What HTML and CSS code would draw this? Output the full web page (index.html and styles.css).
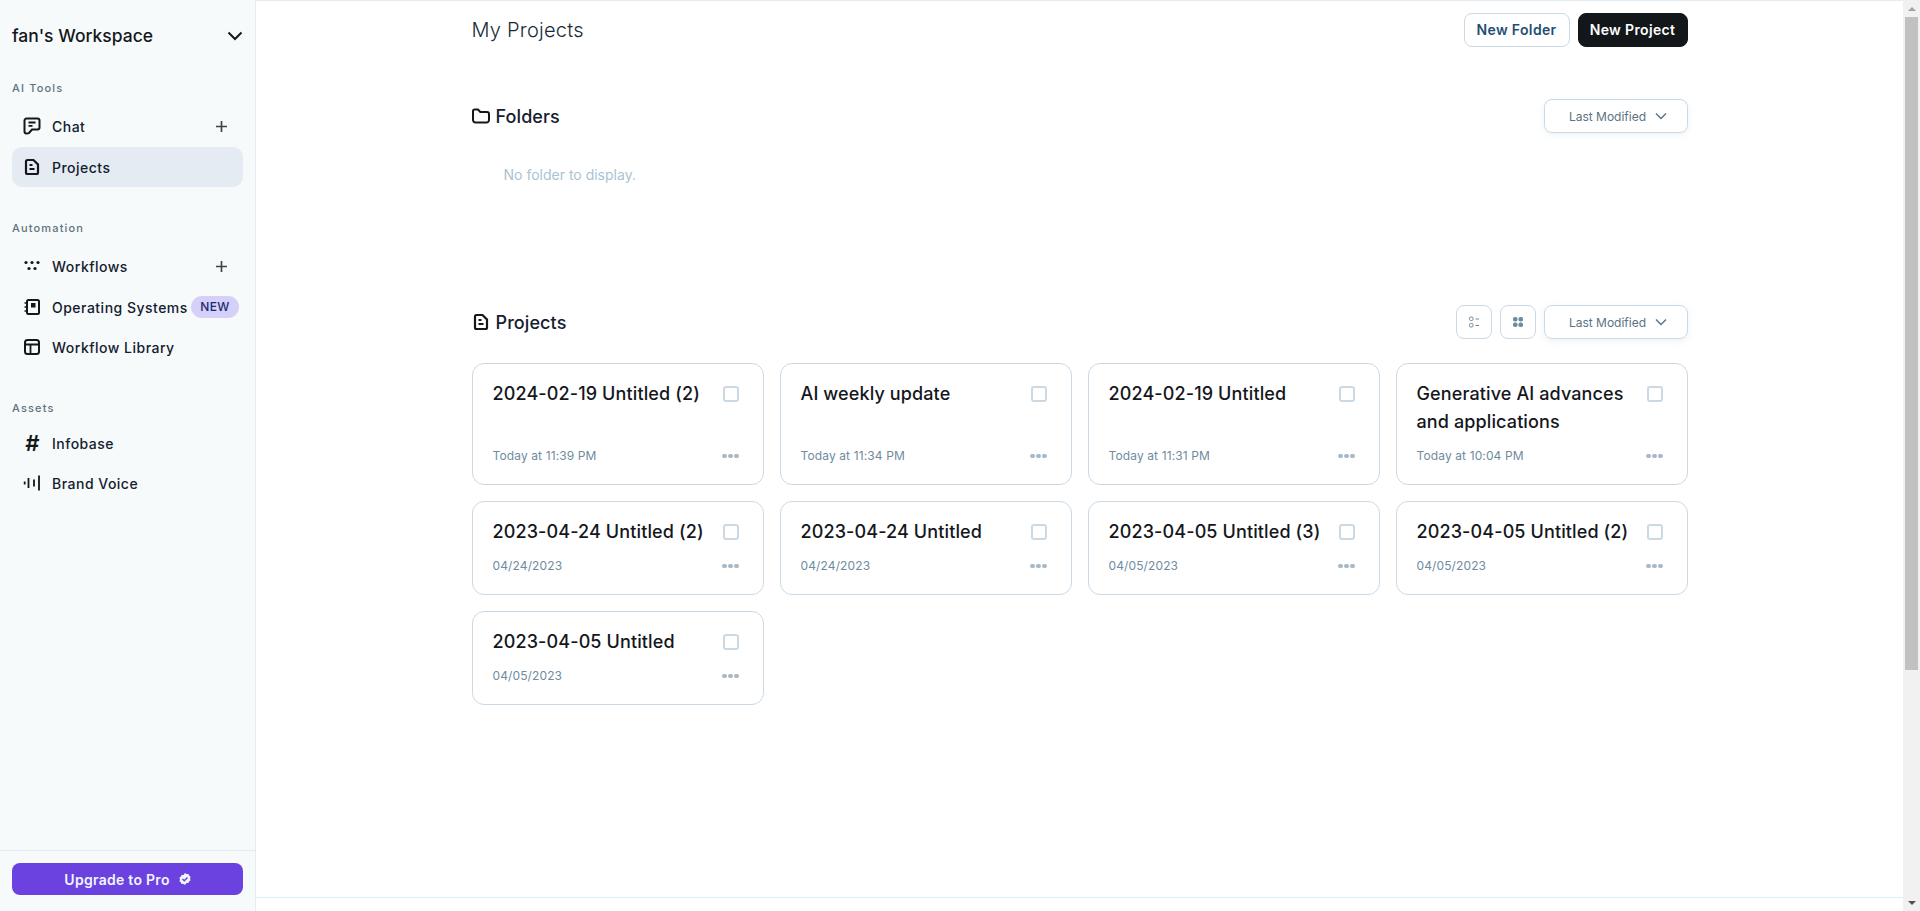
FILE: index.html
```html
<!DOCTYPE html>
<html lang="en">
<head>
<meta charset="utf-8">
<title>My Projects</title>
<link rel="stylesheet" href="styles.css">
</head>
<body>
<aside class="sidebar">
  <div class="side-top">
    <div class="workspace">
      <span>fan's Workspace</span>
      <svg class="ws-caret" width="16" height="16" viewBox="0 0 16 16"><path d="M1.500 4.500L8 11l6.500-6.500" fill="none" stroke="currentColor" stroke-width="2"/></svg>
    </div>
    <div class="group group-ai">
      <div class="group-label">AI Tools</div>
      <div class="nav-item nav-tall">
        <svg class="ico" viewBox="0 0 18 18"><path d="M3.500 1.500h11a2 2 0 0 1 2 2v7a2 2 0 0 1-2 2H9l-3 3.500c-.5.5-1.500.5-2.500.5a2 2 0 0 1-2-2v-11a2 2 0 0 1 2-2z" fill="none" stroke="currentColor" stroke-width="2"/><path d="M5.500 5.500h7M5.500 8.800h4" stroke="currentColor" stroke-width="1.800"/></svg>
        <span class="nav-text">Chat</span>
        <svg class="plus" viewBox="0 0 12 12"><path d="M6 0v12M0 6h12" stroke="currentColor" stroke-width="1.800"/></svg>
      </div>
      <div class="nav-item nav-active">
        <svg class="ico" viewBox="0 0 18 18"><path d="M4.500 2h6l4.500 4.500v8a1.500 1.500 0 0 1-1.500 1.500h-9A1.500 1.500 0 0 1 3 14.500v-11A1.500 1.500 0 0 1 4.500 2z" fill="none" stroke="currentColor" stroke-width="2.200"/><path d="M6.500 7h3M6.500 11h5" stroke="currentColor" stroke-width="1.800"/></svg>
        <span class="nav-text">Projects</span>
      </div>
    </div>
    <div class="group group-auto">
      <div class="group-label">Automation</div>
      <div class="nav-item nav-tall">
        <svg class="ico" viewBox="0 0 18 18"><g fill="currentColor"><circle cx="3" cy="5.500" r="1.600"/><circle cx="9" cy="5.500" r="1.600"/><circle cx="15" cy="5.500" r="1.600"/><circle cx="6" cy="11.500" r="1.600"/><circle cx="12" cy="11.500" r="1.600"/></g></svg>
        <span class="nav-text">Workflows</span>
        <svg class="plus" viewBox="0 0 12 12"><path d="M6 0v12M0 6h12" stroke="currentColor" stroke-width="1.800"/></svg>
      </div>
      <div class="nav-item">
        <svg class="ico" viewBox="0 0 18 18"><rect x="4" y="2" width="12" height="14" rx="1.500" fill="none" stroke="currentColor" stroke-width="2"/><rect x="8" y="5" width="4.500" height="4.500" fill="currentColor"/><path d="M1.500 5h3M1.500 9h3M1.500 13h3" stroke="currentColor" stroke-width="1.600"/></svg>
        <span class="nav-text">Operating Systems</span>
        <span class="badge">NEW</span>
      </div>
      <div class="nav-item">
        <svg class="ico" viewBox="0 0 18 18"><rect x="2" y="2" width="14" height="14" rx="2.500" fill="none" stroke="currentColor" stroke-width="2"/><path d="M2 6.500h14M7.500 6.500V16" stroke="currentColor" stroke-width="1.800"/></svg>
        <span class="nav-text">Workflow Library</span>
      </div>
    </div>
    <div class="group group-assets">
      <div class="group-label">Assets</div>
      <div class="nav-item">
        <span class="ico hash">#</span>
        <span class="nav-text">Infobase</span>
      </div>
      <div class="nav-item">
        <svg class="ico" viewBox="0 0 18 18"><path d="M1.700 7.500v3M5.500 4v10M11 5.500v7M16 1.500v15" stroke="currentColor" stroke-width="1.800" fill="none"/></svg>
        <span class="nav-text">Brand Voice</span>
      </div>
    </div>
  </div>
  <div class="side-foot">
    <div class="upgrade">
      <span>Upgrade to Pro</span>
      <svg width="12" height="12" viewBox="0 0 12 12"><path d="M6 0l1.500 1 1.900-.1.700 1.700 1.500 1.100-.6 1.800.6 1.800-1.500 1.100-.7 1.700-1.900-.1L6 12l-1.500-1-1.900.1-.7-1.700L.4 8.300 1 6.500.4 4.700l1.500-1.100.7-1.700 1.900.1z" fill="#f1f5ff"/><path d="M3.500 6l1.800 1.800 3.200-3.300" fill="none" stroke="#6b41e0" stroke-width="1.500"/></svg>
    </div>
  </div>
</aside>
<main class="main">
  <div class="content">
    <header class="page-head">
      <h1>My Projects</h1>
      <div class="head-actions">
        <button class="btn btn-light">New Folder</button>
        <button class="btn btn-dark">New Project</button>
      </div>
    </header>
    <section class="sec-folders">
      <div class="sec-head">
        <h2><svg class="sec-ico" viewBox="0 0 18 18"><path d="M2.500 2.500h3.500l2.300 2.500H15a2 2 0 0 1 2 2v6a2.500 2.500 0 0 1-2.500 2.500H3.500A2.500 2.500 0 0 1 1 13V4A1.500 1.500 0 0 1 2.500 2.500z" fill="none" stroke="currentColor" stroke-width="2"/></svg>Folders</h2>
        <div class="select">Last Modified<svg class="chev" viewBox="0 0 12 8"><path d="M1 1.500l5 5 5-5" fill="none" stroke="currentColor" stroke-width="1.400"/></svg></div>
      </div>
      <p class="empty">No folder to display.</p>
    </section>
    <section class="sec-projects">
      <div class="sec-head">
        <h2><svg class="sec-ico" viewBox="0 0 18 18"><path d="M4.500 2h6l4.500 4.500v8a1.500 1.500 0 0 1-1.500 1.500h-9A1.500 1.500 0 0 1 3 14.500v-11A1.500 1.500 0 0 1 4.500 2z" fill="none" stroke="currentColor" stroke-width="2.200"/><path d="M6.500 7h3M6.500 11h5" stroke="currentColor" stroke-width="1.800"/></svg>Projects</h2>
        <div class="tools">
          <div class="tool"><svg width="12" height="12" viewBox="0 0 12 12"><g fill="none" stroke="#6f8ba0" stroke-width="1"><rect x="1.500" y="1" width="3.500" height="3.500" rx="1.200"/><rect x="1.500" y="7.500" width="3.500" height="3.500" rx="1.200"/><path d="M7.500 3h3.500M7.500 9.500h3.500"/></g></svg></div>
          <div class="tool"><svg width="12" height="12" viewBox="0 0 12 12"><g fill="#6f8ba0"><rect x="1" y="1" width="4.500" height="4.500" rx="1.800"/><rect x="6.500" y="1" width="4.500" height="4.500" rx="1.800"/><rect x="1" y="6.500" width="4.500" height="4.500" rx="1.800"/><rect x="6.500" y="6.500" width="4.500" height="4.500" rx="1.800"/></g></svg></div>
          <div class="select">Last Modified<svg class="chev" viewBox="0 0 12 8"><path d="M1 1.500l5 5 5-5" fill="none" stroke="currentColor" stroke-width="1.400"/></svg></div>
        </div>
      </div>
      <div class="cards">
        <article class="card card-tall"><div class="card-top"><div class="card-title">2024-02-19 Untitled (2)</div><span class="check"></span></div><div class="card-foot"><span class="date">Today at 11:39 PM</span><span class="dots"><i></i><i></i><i></i></span></div></article>
        <article class="card card-tall"><div class="card-top"><div class="card-title">AI weekly update</div><span class="check"></span></div><div class="card-foot"><span class="date">Today at 11:34 PM</span><span class="dots"><i></i><i></i><i></i></span></div></article>
        <article class="card card-tall"><div class="card-top"><div class="card-title">2024-02-19 Untitled</div><span class="check"></span></div><div class="card-foot"><span class="date">Today at 11:31 PM</span><span class="dots"><i></i><i></i><i></i></span></div></article>
        <article class="card card-tall"><div class="card-top"><div class="card-title">Generative AI advances and applications</div><span class="check"></span></div><div class="card-foot"><span class="date">Today at 10:04 PM</span><span class="dots"><i></i><i></i><i></i></span></div></article>
        <article class="card"><div class="card-top"><div class="card-title">2023-04-24 Untitled (2)</div><span class="check"></span></div><div class="card-foot"><span class="date">04/24/2023</span><span class="dots"><i></i><i></i><i></i></span></div></article>
        <article class="card"><div class="card-top"><div class="card-title">2023-04-24 Untitled</div><span class="check"></span></div><div class="card-foot"><span class="date">04/24/2023</span><span class="dots"><i></i><i></i><i></i></span></div></article>
        <article class="card"><div class="card-top"><div class="card-title">2023-04-05 Untitled (3)</div><span class="check"></span></div><div class="card-foot"><span class="date">04/05/2023</span><span class="dots"><i></i><i></i><i></i></span></div></article>
        <article class="card"><div class="card-top"><div class="card-title">2023-04-05 Untitled (2)</div><span class="check"></span></div><div class="card-foot"><span class="date">04/05/2023</span><span class="dots"><i></i><i></i><i></i></span></div></article>
        <article class="card"><div class="card-top"><div class="card-title">2023-04-05 Untitled</div><span class="check"></span></div><div class="card-foot"><span class="date">04/05/2023</span><span class="dots"><i></i><i></i><i></i></span></div></article>
      </div>
    </section>
  </div>
  <div class="main-foot"></div>
</main>
<div class="scrollbar">
  <span class="arrow arrow-up"></span>
  <div class="track"><div class="thumb"></div></div>
  <span class="arrow arrow-down"></span>
</div>
</body>
</html>
```
FILE: styles.css
```css
* { box-sizing: border-box; }
html, body { margin: 0; height: 100%; }
body {
  display: flex;
  height: 911px;
  overflow: hidden;
  background: #fff;
  color: #14171c;
  font-family: Inter, "Liberation Sans", sans-serif;
}
.sidebar {
  width: 256px;
  flex: none;
  display: flex;
  flex-direction: column;
  justify-content: space-between;
  background: #f6fafb;
  border-right: 1px solid #e4ecf3;
}
.side-top { padding: 0 12px; }
.workspace {
  display: flex;
  align-items: center;
  justify-content: space-between;
  height: 71px;
  margin-bottom: 10px;
  font-size: 17.5px;
  font-weight: 500;
  color: #14171c;
}
.group-label {
  font-size: 11px;
  font-weight: 500;
  letter-spacing: 0.105em;
  color: #5f7280;
  line-height: 14px;
}
.group-ai .group-label { margin-bottom: 10px; }
.group-auto { margin-top: 34px; }
.group-auto .group-label { margin-bottom: 10px; }
.group-assets { margin-top: 34px; }
.group-assets .group-label { margin-bottom: 8px; }
.nav-item {
  display: flex;
  align-items: center;
  height: 40px;
  padding: 0 4px 0 11px;
  border-radius: 10px;
  font-size: 14px;
  font-weight: 500;
  letter-spacing: 0.035em;
  color: #14202e;
}
.nav-tall { height: 42px; }
.nav-active { background: #e4ebf2; }
.ico { width: 18px; height: 18px; flex: none; margin-right: 11px; color: #14171c; }
.hash { font-size: 22px; font-weight: 600; line-height: 18px; text-align: center; font-style: italic; letter-spacing: 0; }
.nav-text { flex: 1; white-space: nowrap; }
.plus { width: 11px; height: 11px; margin-right: 12px; color: #3c4248; }
.badge {
  flex: none;
  margin-left: 3px;
  height: 22px;
  width: 48px;
  border-radius: 11px;
  background: #d5d0f9;
  color: #1c2a70;
  font-size: 12px;
  line-height: 22px;
  text-align: center;
  letter-spacing: 0.03em;
}
.side-foot {
  height: 61px;
  padding: 12px 12px 0;
  border-top: 1px solid #e4ecf3;
}
.upgrade {
  height: 32px;
  display: flex;
  align-items: center;
  justify-content: center;
  gap: 9px;
  border-radius: 8px;
  background: #6b41e0;
  color: #f1f5ff;
  font-size: 14px;
  font-weight: 600;
  letter-spacing: 0.02em;
}
.main {
  flex: 1;
  min-width: 0;
  display: flex;
  flex-direction: column;
  justify-content: space-between;
  border-top: 1px solid #e4ecf3;
}
.content { width: 1216px; margin: 0 auto; }
.page-head {
  display: flex;
  align-items: center;
  justify-content: space-between;
  padding-top: 11px;
  height: 47px;
}
h1 { margin: 0; font-size: 20px; font-weight: 300; letter-spacing: 0.012em; color: #1a2b38; }
.head-actions { display: flex; gap: 8px; }
.btn {
  height: 34px;
  border-radius: 8px;
  font-family: inherit;
  font-size: 14px;
  font-weight: 600;
  letter-spacing: 0.025em;
  padding: 0 0 1px;
}
.btn-light { width: 106px; background: #fff; border: 1px solid #cbd9e4; color: #1f4e75; }
.btn-dark { width: 110px; background: #14171a; border: 1px solid #14171a; color: #fff; }
.sec-folders { margin-top: 51px; height: 206px; }
.sec-head { display: flex; align-items: center; justify-content: space-between; height: 34px; }
h2 { display: flex; align-items: center; margin: 0; font-size: 18px; font-weight: 500; letter-spacing: 0.005em; color: #14202e; }
.sec-ico { width: 18px; height: 18px; margin-right: 6px; color: #14171c; }
.select {
  display: flex;
  align-items: center;
  justify-content: center;
  gap: 9px;
  width: 144px;
  height: 34px;
  padding-left: 5px;
  border: 1px solid #cbd9e4;
  border-radius: 8px;
  font-size: 12px;
  color: #5b7283;
  box-shadow: 0 2px 6px rgba(190, 210, 225, 0.3);
}
.chev { width: 12px; height: 8px; }
.empty { margin: 32px 0 0 32px; font-size: 14px; line-height: 20px; color: #a9c3d2; }
.tools { display: flex; gap: 8px; }
.tool {
  display: flex;
  align-items: center;
  justify-content: center;
  width: 36px;
  height: 34px;
  border: 1px solid #cbd9e4;
  border-radius: 8px;
}
.cards {
  display: grid;
  grid-template-columns: repeat(4, 292px);
  gap: 16px;
  margin-top: 24px;
}
.card {
  display: flex;
  flex-direction: column;
  justify-content: space-between;
  height: 94px;
  padding: 16px 24px 20px 20px;
  border: 1px solid #cbd9e4;
  border-radius: 12px;
}
.card-tall { height: 122px; }
.card-top { display: flex; justify-content: space-between; gap: 12px; }
.card-title { font-size: 18px; font-weight: 500; line-height: 28px; letter-spacing: 0.12px; color: #14171c; }
.check {
  flex: none;
  width: 16px;
  height: 16px;
  margin-top: 6px;
  border: 2px solid #cbd9e4;
  border-radius: 3px;
}
.card-foot { display: flex; align-items: center; justify-content: space-between; }
.date { font-size: 12px; line-height: 16px; letter-spacing: 0.01em; color: #6f8ba0; }
.dots { display: flex; gap: 1.500px; }
.dots i { width: 4.500px; height: 4.500px; border-radius: 50%; background: #a7b9c7; }
.main-foot { height: 14px; border-top: 1px solid #e4ecf3; }
.scrollbar {
  width: 17px;
  flex: none;
  display: flex;
  flex-direction: column;
  align-items: center;
  background: #f1f1f1;
}
.arrow { flex: none; width: 17px; height: 17px; display: flex; align-items: center; justify-content: center; }
.arrow::before { content: ""; width: 0; height: 0; border-left: 4px solid transparent; border-right: 4px solid transparent; }
.arrow-up::before { border-bottom: 4px solid #a3a3a3; }
.arrow-down::before { border-top: 4px solid #505050; }
.track { flex: 1; width: 100%; padding: 0 2px; }
.thumb { height: 653px; background: #c1c1c1; }
```
